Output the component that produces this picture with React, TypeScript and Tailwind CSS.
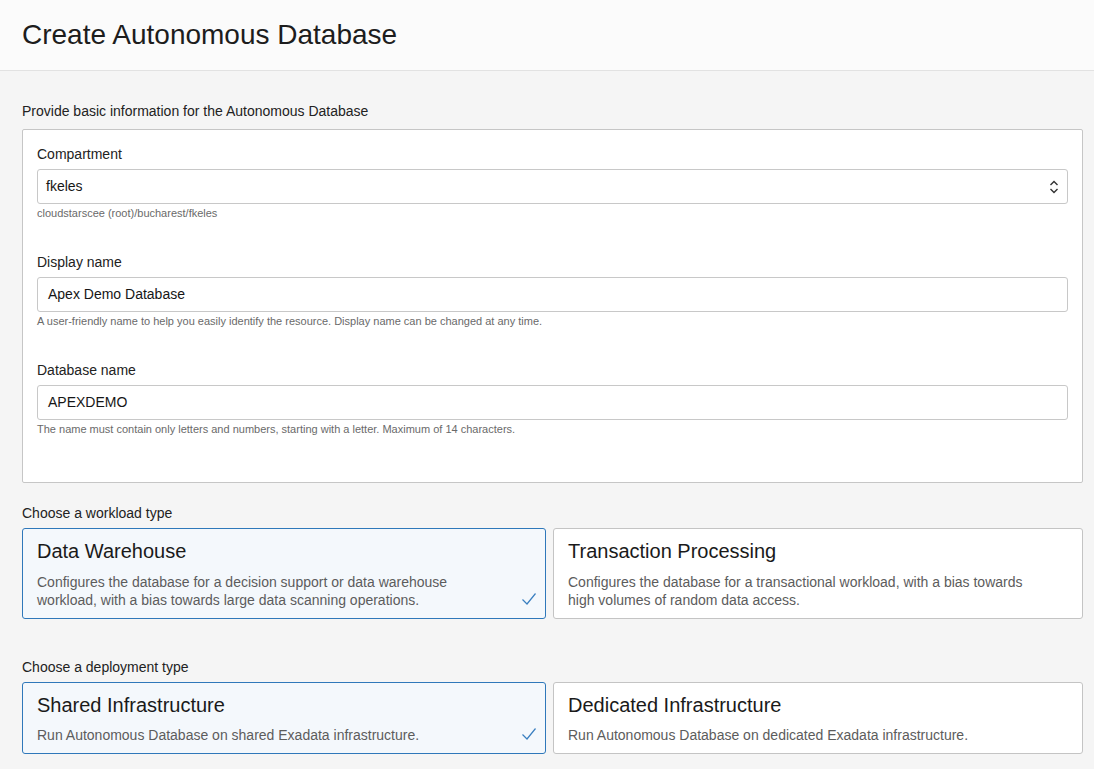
import React from "react";

const fields = [
  {
    label: "Compartment",
    value: "fkeles",
    help: "cloudstarscee (root)/bucharest/fkeles",
    select: true,
  },
  {
    label: "Display name",
    value: "Apex Demo Database",
    help: "A user-friendly name to help you easily identify the resource. Display name can be changed at any time.",
  },
  {
    label: "Database name",
    value: "APEXDEMO",
    help: "The name must contain only letters and numbers, starting with a letter. Maximum of 14 characters.",
  },
];

const workloads = [
  {
    title: "Data Warehouse",
    desc: "Configures the database for a decision support or data warehouse workload, with a bias towards large data scanning operations.",
    selected: true,
  },
  {
    title: "Transaction Processing",
    desc: "Configures the database for a transactional workload, with a bias towards high volumes of random data access.",
  },
];

const deployments = [
  {
    title: "Shared Infrastructure",
    desc: "Run Autonomous Database on shared Exadata infrastructure.",
    selected: true,
  },
  {
    title: "Dedicated Infrastructure",
    desc: "Run Autonomous Database on dedicated Exadata infrastructure.",
  },
];

function Check() {
  return (
    <svg width="16" height="14" viewBox="0 0 16 14" className="absolute right-[8px] bottom-[12px]">
      <path d="M1.5 7.5 L6 12 L14.5 1.5" fill="none" stroke="#3a7fc0" strokeWidth="1.2" />
    </svg>
  );
}

function Card({ title, desc, selected, tall }: { title: string; desc: string; selected?: boolean; tall?: boolean }) {
  return (
    <div
      className={`relative rounded-[3px] border px-[14px] ${tall ? "h-[91px]" : "h-[72px]"} ${
        selected ? "border-[#2f78ba] bg-[#f4f8fc]" : "border-[#c4c4c4] bg-white"
      }`}
    >
      <div className="pt-[10px] text-[20px] leading-[24px] text-[#1a1a1a]">{title}</div>
      <div className={`${tall ? "mt-[10px] pr-[30px]" : "mt-[9px]"} text-[14px] leading-[18px] text-[#5c5c5c]`}>{desc}</div>
      {selected && <Check />}
    </div>
  );
}

export default function App() {
  return (
    <div className="min-h-screen bg-[#f5f5f5] font-['Liberation_Sans',Arial,sans-serif] text-[#333]">
      <header className="h-[71px] border-b border-[#e2e2e2] bg-[#fbfbfb] px-[22px] pt-[18px]">
        <h1 className="text-[28px] leading-[34px] text-[#1d1d1d]">Create Autonomous Database</h1>
      </header>

      <main className="pl-[22px] pr-[11px] pt-[31px]">
        <div className="text-[14px] leading-[18px] text-[#222]">Provide basic information for the Autonomous Database</div>
        <div className="mt-[9px] h-[354px] rounded-[2px] border border-[#c6c6c6] bg-white px-[14px] pt-[15px]">
          {fields.map((f, i) => (
            <div key={f.label} className={i > 0 ? "mt-[33px]" : ""}>
              <div className="text-[14px] leading-[18px] text-[#222]">{f.label}</div>
              <div className="mt-[6px] flex h-[35px] items-center rounded-[3px] border border-[#c8c8c8] bg-white pl-[8px] pr-[8px] text-[14px]">
                <span className={`flex-1 text-[#161616] ${f.select ? "" : "pl-[2px]"}`}>{f.value}</span>
                {f.select && (
                  <svg width="10" height="14" viewBox="0 0 10 14">
                    <path d="M1.5 5 L5 1.5 L8.5 5 M1.5 9 L5 12.5 L8.5 9" fill="none" stroke="#333" strokeWidth="1.4" />
                  </svg>
                )}
              </div>
              <div className="mt-[3px] text-[11px] leading-[13px] text-[#6a6a6a]">{f.help}</div>
            </div>
          ))}
        </div>

        <div className="mt-[21px] text-[14px] leading-[18px] text-[#222]">Choose a workload type</div>
        <div className="mt-[6px] grid grid-cols-[524px_1fr] gap-[7px]">
          {workloads.map((w) => (
            <Card key={w.title} {...w} tall />
          ))}
        </div>

        <div className="mt-[39px] text-[14px] leading-[18px] text-[#222]">Choose a deployment type</div>
        <div className="mt-[6px] grid grid-cols-[524px_1fr] gap-[7px]">
          {deployments.map((d) => (
            <Card key={d.title} {...d} />
          ))}
        </div>
      </main>
    </div>
  );
}
